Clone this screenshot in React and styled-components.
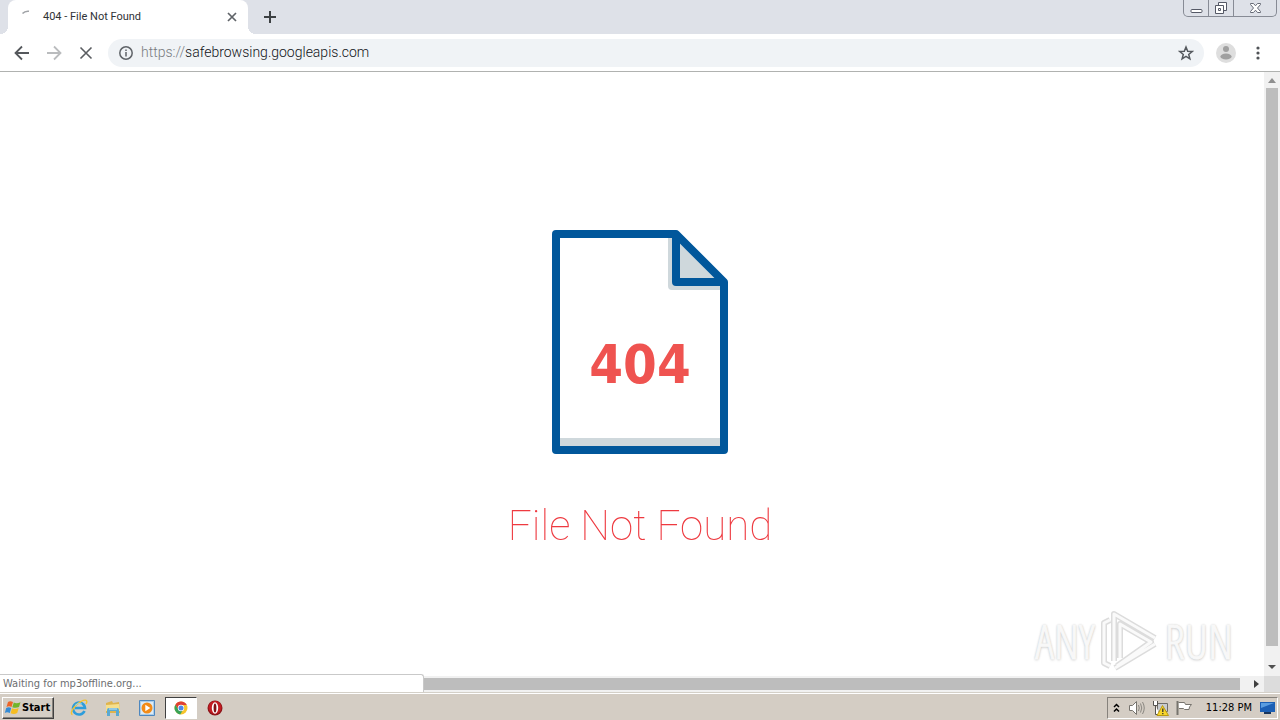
import React from 'react';
import styled, {createGlobalStyle} from "styled-components";

const GlobalStyle=createGlobalStyle`
*{
  box-sizing:border-box;
}
html, body{
  margin:0;
  padding:0;
}
body{
  overflow:hidden;
  font-family:"DejaVu Sans Condensed","DejaVu Sans",sans-serif;
  font-size:11px;
}
button, input{
  font-family:inherit;
  margin:0;
  padding:0;
  border:0;
  background:none;
}
svg{
  display:block;
  flex:none;
}
`;

const Desktop=styled.div`
display:flex;
flex-direction:column;
height:100vh;
background-color:#ffffff;
`;

const TabStrip=styled.div`
display:flex;
height:34px;
padding-left:8px;
background-color:#dee1e8;
`;

const Tab=styled.div`
display:flex;
align-items:center;
position:relative;
width:240px;
padding:0 10px 0 12px;
background-color:#ffffff;
border-radius:8px 8px 0 0;
&::before, &::after{
  content:"";
  position:absolute;
  bottom:0;
  width:8px;
  height:8px;
}
&::before{
  left:-8px;
  background:radial-gradient(circle at 0 0, transparent 8px, #ffffff 8px);
}
&::after{
  right:-8px;
  background:radial-gradient(circle at 100% 0, transparent 8px, #ffffff 8px);
}
`;

const TabTitle=styled.span`
flex:1;
margin-left:7px;
font-family:Roboto,sans-serif;
font-size:11px;
line-height:16px;
color:#2f3236;
white-space:nowrap;
`;

const IconButton=styled.button`
display:flex;
align-items:center;
justify-content:center;
flex:none;
width:${({$width})=> $width || 32}px;
height:${({$height})=> $height || 32}px;
`;

const NewTab=styled(IconButton)`
margin-left:8px;
`;

const WindowButtons=styled.div`
display:flex;
height:17px;
margin-left:auto;
margin-right:3px;
border:1px solid #878b95;
border-top:0;
border-radius:0 0 5px 5px;
`;

const WindowButton=styled.button`
display:flex;
align-items:center;
justify-content:center;
width:${({$width})=> $width}px;
height:16px;
& + &{
  border-left:1px solid #878b95;
}
`;

const Toolbar=styled.div`
display:flex;
align-items:center;
height:38px;
padding:0 6px;
border-bottom:1px solid #b0b2b0;
`;

const AddressBar=styled.div`
display:flex;
align-items:center;
flex:1;
height:28px;
margin-left:6px;
margin-right:6px;
padding:0 10px;
border-radius:14px;
background-color:#f0f3f6;
`;

const Address=styled.a`
flex:1;
margin-left:7px;
padding-bottom:2px;
font-family:Roboto,sans-serif;
font-size:14px;
font-weight:300;
line-height:20px;
color:#101418;
text-decoration:none;
white-space:nowrap;
`;

const Scheme=styled.span`
color:#777b80;
`;

const Browser=styled.main`
display:grid;
grid-template-columns:1fr 16px;
grid-template-rows:1fr 16px;
flex:1;
min-height:0;
position:relative;
`;

const Page=styled.section`
display:flex;
flex-direction:column;
align-items:center;
padding:158px 0 0 16px;
overflow:hidden;
`;

const Title=styled.h1`
margin:46px 0 0;
font-family:Roboto,sans-serif;
font-size:42px;
font-weight:100;
line-height:52px;
color:#ee3a40;
white-space:nowrap;
will-change:opacity;
`;

const ScrollBar=styled.div`
display:flex;
flex-direction:${({$across})=> $across ? "row" : "column"};
background-color:#f1f1f1;
`;

const ScrollThumb=styled.div`
flex:1;
margin:${({$across})=> $across ? "2px 8px 2px 0" : "0 2px 14px"};
background-color:#bdbdbd;
`;

const Corner=styled.div`
background-color:#dcdcdc;
`;

const StatusBubble=styled.div`
position:absolute;
left:0;
bottom:0;
width:33%;
min-width:424px;
height:18px;
padding-left:3px;
border-top:1px solid #c9c9c9;
border-right:1px solid #c9c9c9;
border-radius:0 3px 0 0;
background-color:#ffffff;
font-size:11px;
line-height:17px;
color:#6c6e70;
max-width:425px;
`;

const Watermark=styled.div`
display:flex;
align-items:center;
gap:5px;
position:absolute;
right:47px;
bottom:20px;
font-family:"Open Sans Condensed Light","Roboto Condensed Light","Roboto Condensed","Open Sans Condensed",sans-serif;
font-size:47px;
font-weight:400;
line-height:62px;
color:#f8f8f8;
-webkit-text-stroke:1px #f8f8f8;
text-shadow:0 0 2px #b8b8b8, 0 1px 3px #c8c8c8;
`;

const Taskbar=styled.footer`
display:flex;
align-items:center;
height:28px;
padding:2px 2px 0;
border-top:1px solid #d4d0c8;
background-color:#d4cdc4;
box-shadow:inset 0 1px 0 #ffffff;
`;

const StartButton=styled.button`
display:flex;
align-items:center;
gap:1px;
width:52px;
height:22px;
padding-left:1px;
border:1px solid;
border-color:#ffffff #404040 #404040 #ffffff;
box-shadow:inset -1px -1px 0 #86827c;
background-color:#d4cdc4;
font-family:"DejaVu Sans Condensed",sans-serif;
font-size:11px;
font-weight:700;
color:#000000;
`;

const Launchers=styled.nav`
display:flex;
gap:2px;
margin-left:9px;
`;

const Launcher=styled.button`
display:flex;
align-items:center;
justify-content:center;
width:32px;
height:22px;
border:1px solid;
border-color:${({$active})=> $active ? "#404040 #ffffff #ffffff #404040" : "transparent"};
background-color:${({$active})=> $active ? "#ffffff" : "transparent"};
`;

const Tray=styled.div`
display:flex;
align-items:center;
gap:7px;
height:22px;
margin-left:auto;
padding:0 1px 0 4px;
border:1px solid;
border-color:#86827c #ffffff #ffffff #86827c;
color:#000000;
`;

const Clock=styled.time`
margin-left:6px;
font-size:11px;
line-height:16px;
white-space:nowrap;
`;

const FileIcon=()=> (
  <svg width="176" height="224" viewBox="0 0 176 224" role="img" aria-label="404">
    <path d="M116 8V56Q116 60 120 60H168V52H124V8Z" fill="#cfd8dc"/>
    <path d="M124 8V52H168Z" fill="#cfd8dc"/>
    <path d="M8 208H168V216H8Z" fill="#cfd8dc"/>
    <path d="M4 4H124L172 52V220H4Z" fill="none" stroke="#01579b" strokeWidth="8" strokeLinejoin="round"/>
    <path d="M124 4V52H172" fill="none" stroke="#01579b" strokeWidth="8" strokeLinejoin="round"/>
    <text x="88" y="153" textAnchor="middle" fontFamily="DejaVu Sans Condensed, sans-serif" fontWeight="700" fontSize="54" fill="#ef5350">404</text>
  </svg>
);

const Arrow=({flip, color})=> (
  <svg width="16" height="16" viewBox="0 0 16 16" transform={flip ? "scale(-1 1)" : undefined}>
    <path d="M15 8H2M8 1.5L1.5 8L8 14.5" fill="none" stroke={color} strokeWidth="1.800"/>
  </svg>
);

const ScrollArrow=({d, color})=> (
  <svg width="16" height="16" viewBox="0 0 16 16"><path d={d} fill={color}/></svg>
);

const WindowsFlag=()=> (
  <svg width="17" height="16" viewBox="0 0 17 16">
    <path d="M4 2Q6 .3 9 2L7.500 7Q5 5.500 2.500 7Z" fill="#ed6528"/>
    <path d="M9.800 2.500Q12.500 4 16.500 2.200L15 7Q12 8.500 8.300 7.200Z" fill="#72b52b"/>
    <path d="M2.200 8Q4.800 6.500 7.200 8L5.800 13Q3 11.500.8 13Z" fill="#348bd6"/>
    <path d="M8 8.200Q11 9.800 14.700 8L13.200 13Q10 14.800 6.600 13.200Z" fill="#f6bd22"/>
  </svg>
);

const ExplorerIcon=()=> (
  <svg width="18" height="18" viewBox="0 0 18 18">
    <path d="M14.500 12A6 6 0 1 1 15 9H5" fill="none" stroke="#2d9ddb" strokeWidth="2.600"/>
    <path d="M2.500 15.500C-1 15 4 6 11 2.500C16-.2 18 1.500 16 5" fill="none" stroke="#f2c230" strokeWidth="1.400"/>
    <path d="M5 6.500Q8 3 12 5" fill="none" stroke="#8fd8f8" strokeWidth="1"/>
  </svg>
);

const FolderIcon=()=> (
  <svg width="18" height="18" viewBox="0 0 18 18">
    <path d="M2 4L8 2L9 4L15 3L16 14H2Z" fill="#dfb44e"/>
    <path d="M2 6L15 5L16 12H2Z" fill="#f6df8c"/>
    <path d="M3 17V11Q3 9 5 9H13Q15 9 15 11V17H12V12H6V17Z" fill="#5aa9d2"/>
    <path d="M5 10H13" stroke="#c7e7f6"/>
  </svg>
);

const PlayerIcon=()=> (
  <svg width="18" height="18" viewBox="0 0 18 18">
    <path d="M1.500 1.500H16.500V16.500H1.500Z" fill="#a9cdea" stroke="#4d87bf"/>
    <path d="M3 3H15V15H3Z" fill="#dcebf6"/>
    <circle cx="9" cy="9" r="5.500" fill="#f28b17"/>
    <path d="M7.300 5.800L12.300 9L7.300 12.200Z" fill="#ffffff"/>
  </svg>
);

const ChromeIcon=()=> (
  <svg width="16" height="16" viewBox="0 0 16 16">
    <circle cx="8" cy="8" r="6.500" fill="#f6c42d"/>
    <path d="M2.400 4.700A6.500 6.500 0 0 1 13.800 5H8L5.400 9.500Z" fill="#df4034"/>
    <path d="M2.400 4.700L5.400 9.500L9.500 10.700L7.200 14.450A6.500 6.500 0 0 1 2.400 4.700Z" fill="#38a257"/>
    <circle cx="8" cy="8" r="3.200" fill="#ffffff"/>
    <circle cx="8" cy="8" r="2.500" fill="#4d87e8"/>
  </svg>
);

const OperaIcon=()=> (
  <svg width="16" height="16" viewBox="0 0 16 16">
    <circle cx="8" cy="8" r="7.500" fill="#8c1519"/>
    <circle cx="8" cy="7.500" r="6.500" fill="#c41b22"/>
    <ellipse cx="8" cy="8" rx="3.200" ry="5.800" fill="#ffffff"/>
    <ellipse cx="8" cy="8" rx="1.400" ry="4.600" fill="#7e1115"/>
  </svg>
);

const launchers=[
  {name:"Internet Explorer", icon:<ExplorerIcon/>},
  {name:"Windows Explorer", icon:<FolderIcon/>},
  {name:"Media Player", icon:<PlayerIcon/>},
  {name:"Chrome", icon:<ChromeIcon/>, active:true},
  {name:"Opera", icon:<OperaIcon/>}
];

const App = () => {
  return (
    <Desktop>
      <GlobalStyle/>
      <TabStrip>
        <Tab>
          <svg width="16" height="16" viewBox="0 0 16 16">
            <path d="M2.500 4.500Q5 1.800 9 2.300" fill="none" stroke="#a0a3a7" strokeWidth="1.600"/>
          </svg>
          <TabTitle>404 - File Not Found</TabTitle>
          <IconButton $width={12} $height={16} aria-label="Close tab">
            <svg width="10" height="10" viewBox="0 0 10 10">
              <path d="M1 1L9 9M9 1L1 9" stroke="#5f6368" strokeWidth="1.700"/>
            </svg>
          </IconButton>
        </Tab>
        <NewTab $width={28} $height={34} aria-label="New tab">
          <svg width="12" height="12" viewBox="0 0 12 12">
            <path d="M6 0V12M0 6H12" stroke="#3c4043" strokeWidth="2"/>
          </svg>
        </NewTab>
        <WindowButtons>
          <WindowButton $width={24} aria-label="Minimize">
            <svg width="13" height="14" viewBox="0 0 13 14">
              <rect x="1" y="8.500" width="11" height="3" rx="1" fill="#ffffff" stroke="#555966"/>
            </svg>
          </WindowButton>
          <WindowButton $width={25} aria-label="Restore">
            <svg width="14" height="14" viewBox="0 0 14 14">
              <path d="M4.500 1.500H12.500V9.500H4.500Z" fill="#ffffff" stroke="#555966"/>
              <path d="M1.500 4.500H9.500V12.500H1.500Z" fill="#ffffff" stroke="#555966"/>
              <path d="M4.500 7.500H6.500V9.500H4.500Z" fill="none" stroke="#555966"/>
            </svg>
          </WindowButton>
          <WindowButton $width={43} aria-label="Close">
            <svg width="13" height="12" viewBox="0 0 13 12">
              <path d="M1.500 1.500H4.500L6.500 3.800L8.500 1.500H11.500V2.500L8.500 6L11.500 9.500V10.500H8.500L6.500 8.200L4.500 10.500H1.500V9.500L4.500 6L1.500 2.500Z" fill="#ffffff" stroke="#666a76"/>
            </svg>
          </WindowButton>
        </WindowButtons>
      </TabStrip>

      <Toolbar>
        <IconButton aria-label="Back"><Arrow color="#55585c"/></IconButton>
        <IconButton aria-label="Forward"><Arrow flip color="#babcbe"/></IconButton>
        <IconButton aria-label="Stop">
          <svg width="14" height="14" viewBox="0 0 14 14">
            <path d="M1.500 1.500L12.500 12.500M12.500 1.500L1.500 12.500" stroke="#5a5d61" strokeWidth="1.600"/>
          </svg>
        </IconButton>
        <AddressBar>
          <svg width="16" height="16" viewBox="0 0 16 16">
            <circle cx="8" cy="8" r="6.200" fill="none" stroke="#5f6368" strokeWidth="1.500"/>
            <path d="M8 7V11.500M8 4.400V6" stroke="#5f6368" strokeWidth="1.500"/>
          </svg>
          <Address href="https://safebrowsing.googleapis.com"><Scheme>https://</Scheme>safebrowsing.googleapis.com</Address>
          <IconButton $width={16} $height={20} aria-label="Bookmark this page">
            <svg width="16" height="16" viewBox="0 0 16 16">
              <path d="M8 2L9.700 6.200L14.200 6.500L10.700 9.400L11.900 13.800L8 11.400L4.100 13.800L5.300 9.400L1.800 6.500L6.300 6.200Z" fill="none" stroke="#55595e" strokeWidth="1.500"/>
            </svg>
          </IconButton>
        </AddressBar>
        <IconButton aria-label="Profile">
          <svg width="20" height="20" viewBox="0 0 20 20">
            <circle cx="10" cy="10" r="10" fill="#dedede"/>
            <circle cx="10" cy="6" r="3" fill="#a0a0a0"/>
            <ellipse cx="10" cy="13.500" rx="5.600" ry="3" fill="#a0a0a0"/>
          </svg>
        </IconButton>
        <IconButton aria-label="Menu">
          <svg width="4" height="14" viewBox="0 0 4 14">
            <circle cx="2" cy="2" r="1.600" fill="#505357"/>
            <circle cx="2" cy="7" r="1.600" fill="#505357"/>
            <circle cx="2" cy="12" r="1.600" fill="#505357"/>
          </svg>
        </IconButton>
      </Toolbar>

      <Browser>
        <Page>
          <FileIcon/>
          <Title>File Not Found</Title>
        </Page>
        <ScrollBar>
          <ScrollArrow d="M4 11L8 6L12 11Z" color="#8f8f8f"/>
          <ScrollThumb/>
          <ScrollArrow d="M4 5L8 9L12 5Z" color="#505050"/>
        </ScrollBar>
        <ScrollBar $across>
          <ScrollArrow d="M10 4L6 8L10 12Z" color="#8f8f8f"/>
          <ScrollThumb $across/>
          <ScrollArrow d="M6 4L11 8L6 12Z" color="#404040"/>
        </ScrollBar>
        <Corner/>
        <StatusBubble>Waiting for mp3offline.org...</StatusBubble>
        <Watermark>
          <span>ANY</span>
          <svg width="60" height="62" viewBox="0 0 60 62">
            <g fill="none" strokeLinejoin="round">
              <path d="M14 51V4L55 28M20 48V14L51 32L17 56M10 10L4 13V53L10 56M15 58L55 34" stroke="#dcdcdc" strokeWidth="6"/>
              <path d="M14 51V4L55 28M20 48V14L51 32L17 56M10 10L4 13V53L10 56M15 58L55 34" stroke="#fafafa" strokeWidth="3"/>
            </g>
          </svg>
          <span>RUN</span>
        </Watermark>
      </Browser>

      <Taskbar>
        <StartButton><WindowsFlag/>Start</StartButton>
        <Launchers>
          {launchers.map(item => (
            <Launcher key={item.name} $active={item.active} aria-label={item.name}>{item.icon}</Launcher>
          ))}
        </Launchers>
        <Tray>
          <svg width="9" height="12" viewBox="0 0 9 12">
            <path d="M2 5L4.500 2.500L7 5M2 9.500L4.500 7L7 9.500" fill="none" stroke="#000000" strokeWidth="1.500"/>
          </svg>
          <svg width="17" height="16" viewBox="0 0 17 16">
            <path d="M1.500 5.500H4.500L8.500 1.500V14.500L4.500 10.500H1.500Z" fill="#ffffff" stroke="#77746e"/>
            <path d="M10.500 5Q12 8 10.500 11M12.500 3.500Q15 8 12.500 12.500M14.500 2Q18 8 14.500 14" fill="none" stroke="#8a8781"/>
          </svg>
          <svg width="17" height="16" viewBox="0 0 17 16">
            <path d="M5.500 3.500H15.500V11.500H5.500Z" fill="#c9ccd0" stroke="#6f6d69"/>
            <path d="M1.500 1V5.500H5.500V1M3.500 5.500V14.500H8" fill="#ffffff" stroke="#55534f"/>
            <path d="M10.500 5.500L16.500 15.500H5Z" fill="#f7d52c" stroke="#b99a13"/>
            <path d="M10.800 8.500V12M10.800 13V14.300" stroke="#333333" strokeWidth="1.300"/>
          </svg>
          <svg width="17" height="16" viewBox="0 0 17 16">
            <path d="M2.500 2.500H8.500L9.500 4.500H15.500L13.500 7L13 9.500H8.500L7.500 8.500H3" fill="#ffffff" stroke="#77746e"/>
            <path d="M1.500 1V15" stroke="#77746e" strokeWidth="2"/>
          </svg>
          <Clock>11:28 PM</Clock>
          <svg width="17" height="16" viewBox="0 0 17 16">
            <path d="M1 2H16V12H1Z" fill="#1c5fb4"/>
            <path d="M2 3H15L2 8Z" fill="#5a9de0"/>
            <path d="M5 12H12V14H5Z" fill="#18355d"/>
          </svg>
        </Tray>
      </Taskbar>
    </Desktop>
  )
}

export default App;
